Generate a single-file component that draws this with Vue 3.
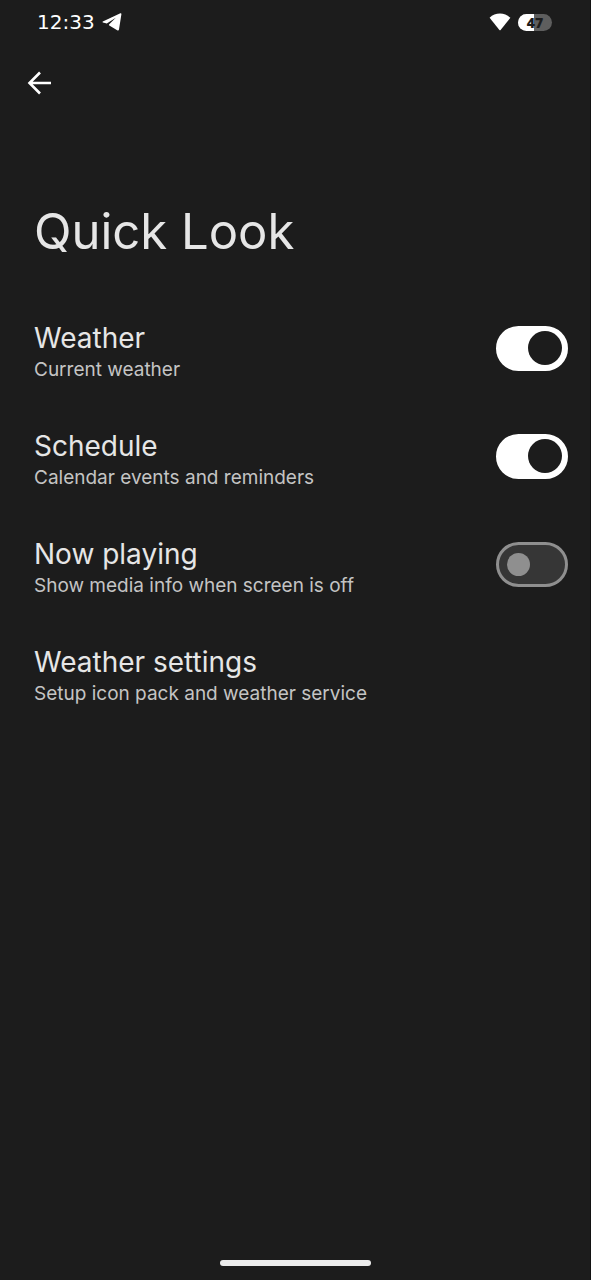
<script setup>
import { reactive } from 'vue'

const battery = 47
const options = reactive([
  { id: 'weather', title: 'Weather', summary: 'Current weather', on: true },
  { id: 'schedule', title: 'Schedule', summary: 'Calendar events and reminders', on: true },
  { id: 'playing', title: 'Now playing', summary: 'Show media info when screen is off', on: false },
])
</script>

<template>
  <div class="screen">
    <header class="status">
      <div class="group">
        <time class="clock">12:33</time>
        <svg class="plane" viewBox="0 0 20 18" aria-hidden="true">
          <path d="M.8 8.4 18.4.3Q19.5 0 19.4 1.300L17 16.600Q16.600 18 15.200 17.200L7.300 12.600Q6.500 12 7.200 11.200L13.800 4.800 5.200 10.200Q4.600 10.500 4 10.300L.9 9.400Q0 9 .8 8.400Z" fill="#fff" />
        </svg>
      </div>
      <div class="group">
        <svg class="wifi" viewBox="0 0 22 18" aria-hidden="true">
          <path d="M.6 4.8Q5 .6 11 .6T21.4 4.8L11.6 17Q11 17.6 10.4 17Z" fill="#fff" />
        </svg>
        <div class="battery">
          <span class="charge" :style="{ width: battery + '%' }"></span>
          <span class="level">{{ battery }}</span>
        </div>
      </div>
    </header>

    <nav class="toolbar">
      <button class="back" type="button" aria-label="Back">
        <svg viewBox="0 0 24 24" aria-hidden="true">
          <path d="M13 1.5 2.5 12 13 22.5M2.5 12H24" fill="none" stroke="#fff" stroke-width="2.6" />
        </svg>
      </button>
    </nav>

    <main class="content">
      <h1>Quick Look</h1>
      <label v-for="item in options" :key="item.id" class="row" :for="item.id">
        <span class="text">
          <span class="title">{{ item.title }}</span>
          <span class="summary">{{ item.summary }}</span>
        </span>
        <input :id="item.id" v-model="item.on" class="switch" type="checkbox" role="switch" />
      </label>
      <a class="row" href="#weather-settings">
        <span class="text">
          <span class="title">Weather settings</span>
          <span class="summary">Setup icon pack and weather service</span>
        </span>
      </a>
    </main>

    <div class="handle"></div>
  </div>
</template>

<style>
body {
  background: #1c1c1c;
}
</style>

<style scoped>
.screen {
  box-sizing: border-box;
  min-height: 100vh;
  display: flex;
  flex-direction: column;
  border-right: 1px solid #121212;
  background: #1c1c1c;
  color: #e6e6e6;
  font-family: Inter, "Liberation Sans", sans-serif;
}
.status {
  display: flex;
  justify-content: space-between;
  align-items: center;
  height: 44px;
  padding: 0 38px 0 37px;
}
.group {
  display: flex;
  align-items: center;
  gap: 7px;
}
.clock {
  font: 20px/24px "DejaVu Sans", sans-serif;
  color: #fff;
}
.plane {
  width: 20px;
  height: 18px;
}
.wifi {
  width: 22px;
  height: 18px;
}
.battery {
  position: relative;
  width: 34px;
  height: 17px;
  border-radius: 9px;
  overflow: hidden;
  background: #5e5e5e;
}
.charge {
  position: absolute;
  inset: 0 auto 0 0;
  background: #fff;
}
.level {
  position: relative;
  display: block;
  text-align: center;
  font: 800 14px/17px "Open Sans", sans-serif;
  color: #1c1c1c;
}
.toolbar {
  display: flex;
  align-items: center;
  height: 78px;
  padding: 0 19px;
}
.back {
  display: flex;
  align-items: center;
  justify-content: center;
  width: 40px;
  height: 40px;
  padding: 0;
  border: 0;
  background: none;
}
.back svg {
  width: 24px;
  height: 24px;
}
.content {
  flex: 1;
  display: flex;
  flex-direction: column;
}
h1 {
  margin: 80px 34px 32px;
  font-size: 49px;
  line-height: 60px;
  font-weight: 400;
}
.row {
  display: flex;
  align-items: center;
  justify-content: space-between;
  height: 108px;
  padding: 0 22px 0 34px;
  color: inherit;
  text-decoration: none;
}
.text {
  display: flex;
  flex-direction: column;
  padding-top: 10px;
}
.title {
  font-size: 28px;
  line-height: 34px;
}
.summary {
  font-size: 19px;
  line-height: 30px;
  color: #c4c4c4;
}
.switch {
  appearance: none;
  box-sizing: border-box;
  display: flex;
  align-items: center;
  width: 72px;
  height: 45px;
  margin: 0;
  padding: 0 8px;
  border: 3px solid #8f8f8f;
  border-radius: 23px;
  background: #363636;
}
.switch::before {
  content: "";
  width: 23px;
  height: 23px;
  border-radius: 50%;
  background: #8f8f8f;
}
.switch:checked {
  justify-content: flex-end;
  padding: 0 3px;
  border-color: #fff;
  background: #fff;
}
.switch:checked::before {
  width: 34px;
  height: 34px;
  background: #1c1c1c;
}
.handle {
  align-self: center;
  width: 151px;
  height: 6px;
  margin-bottom: 14px;
  border-radius: 3px;
  background: #ececec;
}
</style>
